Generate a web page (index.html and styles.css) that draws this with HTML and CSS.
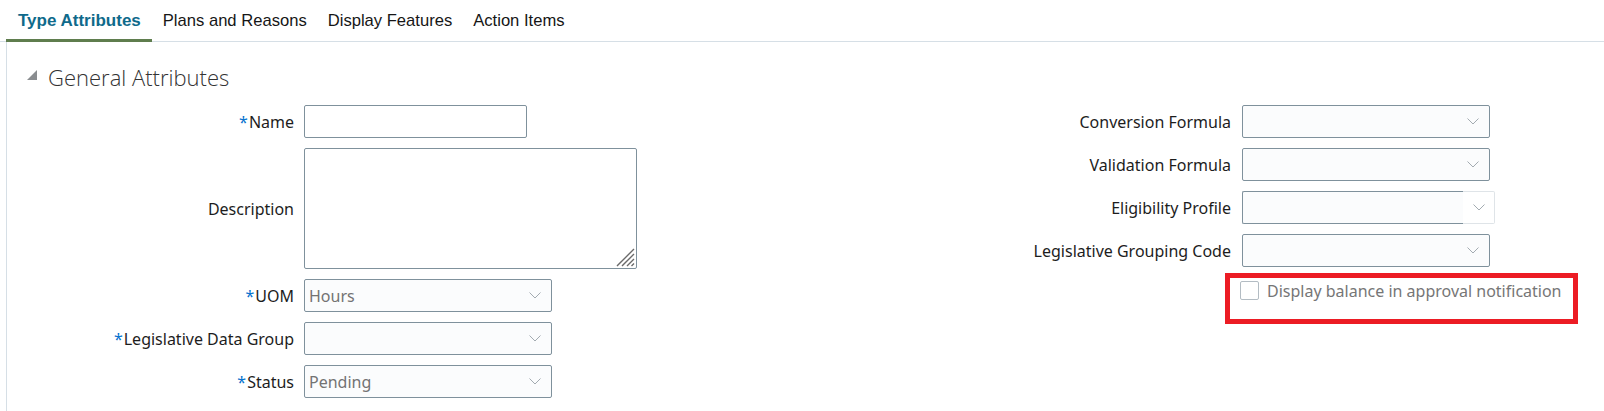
FILE: index.html
```html
<!DOCTYPE html>
<html lang="en">
<head>
<meta charset="utf-8">
<title>Type Attributes</title>
<link rel="stylesheet" href="styles.css">
</head>
<body>
  <nav class="tabs">
    <a class="tab tab-active">Type Attributes</a>
    <a class="tab">Plans and Reasons</a>
    <a class="tab">Display Features</a>
    <a class="tab">Action Items</a>
  </nav>
  <main class="panel">
    <header class="section-head">
      <svg class="disclosure" width="10" height="10" viewBox="0 0 10 10"><polygon points="0,10 10,10 10,0" fill="#8a8d90"/></svg>
      <h2 class="section-title">General Attributes</h2>
    </header>
    <div class="form">
      <div class="col col-left">
        <label class="lbl"><span class="req">*</span>Name</label>
        <div class="field field-name"></div>

        <label class="lbl">Description</label>
        <div class="field field-area">
          <svg class="grip" width="20" height="20" viewBox="0 0 20 20"><path d="M19 2 L2 19 M19 7 L7 19 M19 12 L12 19 M19 16.5 L16.5 19" stroke="#6a6a6a" stroke-width="1.4" fill="none"/></svg>
        </div>

        <label class="lbl"><span class="req">*</span>UOM</label>
        <div class="field select select-left"><span class="val">Hours</span><svg class="chev" width="12" height="7" viewBox="0 0 12 7"><path d="M0.5 0.5 L6 6 L11.5 0.5" stroke="#a3abb1" stroke-width="1" fill="none"/></svg></div>

        <label class="lbl"><span class="req">*</span>Legislative Data Group</label>
        <div class="field select select-left"><span class="val"></span><svg class="chev" width="12" height="7" viewBox="0 0 12 7"><path d="M0.5 0.5 L6 6 L11.5 0.5" stroke="#a3abb1" stroke-width="1" fill="none"/></svg></div>

        <label class="lbl"><span class="req">*</span>Status</label>
        <div class="field select select-left"><span class="val">Pending</span><svg class="chev" width="12" height="7" viewBox="0 0 12 7"><path d="M0.5 0.5 L6 6 L11.5 0.5" stroke="#a3abb1" stroke-width="1" fill="none"/></svg></div>
      </div>

      <div class="col col-right">
        <label class="lbl">Conversion Formula</label>
        <div class="field select select-right"><span class="val"></span><svg class="chev" width="12" height="7" viewBox="0 0 12 7"><path d="M0.5 0.5 L6 6 L11.5 0.5" stroke="#a3abb1" stroke-width="1" fill="none"/></svg></div>

        <label class="lbl">Validation Formula</label>
        <div class="field select select-right"><span class="val"></span><svg class="chev" width="12" height="7" viewBox="0 0 12 7"><path d="M0.5 0.5 L6 6 L11.5 0.5" stroke="#a3abb1" stroke-width="1" fill="none"/></svg></div>

        <label class="lbl">Eligibility Profile</label>
        <div class="combo">
          <div class="combo-input"></div>
          <div class="combo-btn"><svg class="chev" width="12" height="7" viewBox="0 0 12 7"><path d="M0.5 0.5 L6 6 L11.5 0.5" stroke="#a3abb1" stroke-width="1" fill="none"/></svg></div>
        </div>

        <label class="lbl">Legislative Grouping Code</label>
        <div class="field select select-right"><span class="val"></span><svg class="chev" width="12" height="7" viewBox="0 0 12 7"><path d="M0.5 0.5 L6 6 L11.5 0.5" stroke="#a3abb1" stroke-width="1" fill="none"/></svg></div>

        <span class="lbl-empty"></span>
        <div class="highlight">
          <label class="check-row"><span class="checkbox"></span><span class="check-text">Display balance in approval notification</span></label>
        </div>
      </div>
    </div>
  </main>
</body>
</html>
```
FILE: styles.css
```css
html, body {
  margin: 0;
  padding: 0;
  background: #ffffff;
}

body {
  width: 1604px;
  height: 411px;
  overflow: hidden;
  font-family: "Noto Sans", "Open Sans", sans-serif;
  font-size: 16px;
  color: #1d1d1d;
}

.tabs {
  display: flex;
  height: 41px;
  border-bottom: 1px solid #d6dfe6;
  padding-left: 6px;
}

.tab {
  display: flex;
  align-items: center;
  box-sizing: border-box;
  height: 42px;
  margin-bottom: -1px;
  padding: 3px 10px 0 11px;
  border-bottom: 3px solid transparent;
  font-family: "Liberation Sans", Arial, sans-serif;
  font-size: 16.6px;
  color: #161616;
  white-space: nowrap;
}

.tab-active {
  padding-left: 12px;
  padding-right: 11px;
  font-size: 17px;
  color: #0f6a8b;
  font-weight: bold;
  border-bottom-color: #5f7d4e;
}

.panel {
  margin-left: 6px;
  border-left: 1px solid #d6dfe6;
  height: 369px;
}

.section-head {
  display: flex;
  align-items: center;
  height: 56px;
  padding-top: 7px;
  padding-left: 20px;
}

.disclosure {
  display: block;
  margin-top: -5px;
}

.section-title {
  margin: 0 0 0 11px;
  font-family: "Open Sans", "Noto Sans", sans-serif;
  font-weight: 300;
  font-size: 22px;
  color: #333333;
  line-height: 1;
}

.form {
  display: flex;
}

.col {
  display: grid;
  column-gap: 10px;
  row-gap: 10px;
  align-items: center;
  align-content: start;
}

.col-left {
  grid-template-columns: 287px auto;
  width: 699px;
}

.col-right {
  grid-template-columns: 525px auto;
  column-gap: 11px;
}

.lbl {
  text-align: right;
  white-space: nowrap;
  line-height: 20px;
}

.req {
  color: #0572ce;
  margin-right: 1px;
}

.field {
  box-sizing: border-box;
  height: 33px;
  border: 1px solid #7f919c;
  border-radius: 2px;
  background: #ffffff;
}

.field-name {
  width: 223px;
}

.field-area {
  width: 333px;
  height: 121px;
  position: relative;
}

.grip {
  position: absolute;
  right: 1px;
  bottom: 1px;
}

.select {
  display: flex;
  align-items: center;
  justify-content: space-between;
  background: #fbfcfd;
  padding: 0 10px 0 4px;
}

.select-left {
  width: 248px;
}

.select-right {
  width: 248px;
}

.val {
  color: #737373;
}

.chev {
  display: block;
}

.combo {
  display: flex;
  width: 253px;
  height: 33px;
}

.combo-input {
  box-sizing: border-box;
  width: 221px;
  height: 33px;
  border: 1px solid #7f919c;
  border-right: none;
  border-radius: 2px 0 0 2px;
  background: #fbfcfd;
}

.combo-btn {
  box-sizing: border-box;
  width: 32px;
  height: 33px;
  border: 1px solid #dfe4e8;
  border-left: none;
  border-radius: 0 2px 2px 0;
  display: flex;
  align-items: center;
  justify-content: center;
  background: #ffffff;
}

.highlight {
  margin-left: -17px;
  margin-top: -4px;
  width: 353px;
  box-sizing: border-box;
  border: 5px solid #ec1c24;
  padding: 3px 10px 19px 10px;
}

.check-row {
  display: flex;
  align-items: center;
  height: 19px;
}

.checkbox {
  box-sizing: border-box;
  width: 19px;
  height: 19px;
  border: 1px solid #b3bcc3;
  border-radius: 2px;
  background: #ffffff;
  flex: none;
}

.check-text {
  margin-left: 8px;
  color: #767676;
  white-space: nowrap;
}
```
